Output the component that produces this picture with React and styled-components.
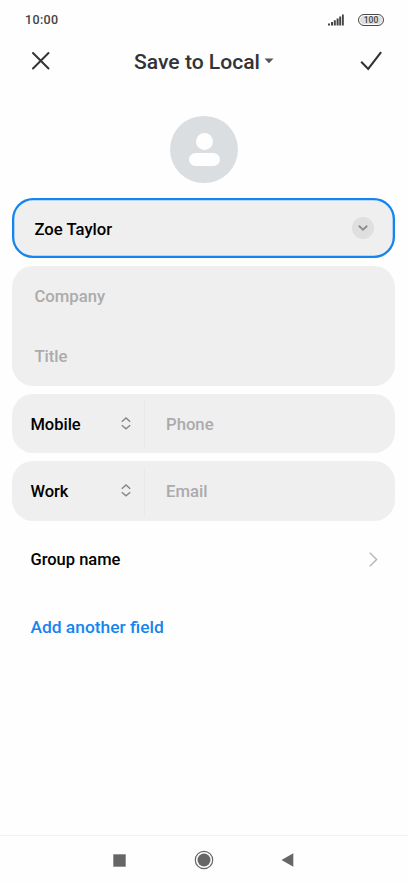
import styled, { createGlobalStyle } from "styled-components";

const GlobalStyle = createGlobalStyle`
  * {
    box-sizing: border-box;
  }
  body {
    margin: 0;
    background: #fefefe;
    font-family: Roboto, "Noto Sans", sans-serif;
    font-weight: 500;
  }
  button,
  input {
    font: inherit;
    color: inherit;
    border: none;
    background: none;
    padding: 0;
  }
  svg {
    display: block;
    flex-shrink: 0;
  }
`;

const StyledScreen = styled.div`
  height: 884px;
  display: flex;
  flex-direction: column;
  overflow: hidden;
`;

const StyledStatusBar = styled.div`
  height: 38px;
  padding: 1px 24px 0 25px;
  display: flex;
  justify-content: space-between;
  align-items: center;
  color: #444;
  font-size: 12.5px;
  letter-spacing: 0.35px;
`;

const StyledStatusIcons = styled.div`
  display: flex;
  align-items: center;
  gap: 14px;
`;

const StyledBattery = styled.div`
  width: 26px;
  height: 12px;
  border: 1px solid #4a4a4a;
  border-radius: 6px;
  box-shadow: inset 0 0 0 1px #fefefe;
  background: #dedede;
  font-size: 8.5px;
  line-height: 10.5px;
  letter-spacing: 0;
  text-align: center;
`;

const StyledHeader = styled.header`
  height: 46px;
  padding: 0 25px 0 31px;
  display: flex;
  justify-content: space-between;
  align-items: center;
  color: #333;
`;

const StyledTitle = styled.button`
  display: flex;
  align-items: center;
  gap: 4px;
  padding-top: 1px;
  margin-right: 3px;
  font-size: 21.1px;
  line-height: 26px;
  white-space: nowrap;
`;

const StyledIconButton = styled.button`
  display: flex;
`;

const StyledAvatar = styled.div`
  width: 67.5px;
  height: 67.5px;
  margin: 31.7px auto 15.3px;
  border-radius: 50%;
  background: #dadee1;
  display: flex;
  flex-direction: column;
  align-items: center;
  padding-top: 17px;
  gap: 3px;
`;

const StyledHead = styled.div`
  width: 17px;
  height: 17px;
  border-radius: 50%;
  background: #fefefe;
`;

const StyledShoulders = styled.div`
  width: 31px;
  height: 13px;
  border-radius: 7px;
  background: #fefefe;
`;

const StyledForm = styled.main`
  flex: 1;
  padding: 0 12.6px 0 12.4px;
  display: flex;
  flex-direction: column;
  gap: 8px;
`;

const StyledCard = styled.div`
  flex-shrink: 0;
  border-radius: 21px;
  background: #efefef;
  box-shadow: ${({ $active }) => ($active ? "inset 0 0 0 2.3px #1485f0" : "none")};
`;

const StyledRow = styled.div`
  height: 59.7px;
  padding: ${({ $top }) => $top || 1}px ${({ $right }) => $right || 17.2}px 0
    ${({ $left }) => $left || 18}px;
  display: flex;
  align-items: center;
  flex-shrink: 0;
`;

const StyledInput = styled.input`
  flex: 1;
  min-width: 0;
  height: 24px;
  outline: none;
  color: #000;
  font-size: 16.7px;

  &::placeholder {
    color: #ababab;
    opacity: 1;
  }
`;

const StyledTypeSelect = styled.button`
  width: 114.6px;
  height: 48px;
  padding-right: 13px;
  margin-right: 21px;
  display: flex;
  justify-content: space-between;
  align-items: center;
  border-right: 1px solid #eaeaea;
  color: #000;
  font-size: 16.5px;

  svg {
    margin-bottom: 1.5px;
  }
`;

const StyledExpand = styled.button`
  width: 22px;
  height: 22px;
  border-radius: 50%;
  background: #dfdfdf;
  display: flex;
  justify-content: center;
  align-items: center;
  margin-bottom: 2.5px;
`;

const StyledLink = styled.button`
  flex: 1;
  text-align: left;
  font-size: ${({ $accent }) => ($accent ? 17.4 : 16.5)}px;
  color: ${({ $accent }) => ($accent ? "#1485f0" : "#000")};
`;

const StyledNavBar = styled.nav`
  height: 49px;
  border-top: 1px solid #f2f2f2;
  padding: 0 114px 0 113px;
  display: flex;
  justify-content: space-between;
  align-items: center;
`;

const SignalIcon = () => (
  <svg width="16" height="12" viewBox="0 0 16 12" fill="#444">
    <path d="M0 9.5h2V11.5H0zM3 8h2v3.5H3zM5.8 6.3h2v5.2h-2zM8.6 4.5h2v7h-2zM11.2 2.5h2v9h-2zM14 .5h1.8v11H14z" />
  </svg>
);

const CloseIcon = () => (
  <svg width="20" height="20" viewBox="0 0 20 20" fill="none" stroke="#333" strokeWidth="2" strokeLinecap="round">
    <path d="M2 2l15.5 15.5M17.5 2L2 17.5" />
  </svg>
);

const CheckIcon = () => (
  <svg width="23" height="20" viewBox="0 0 23 20" fill="none" stroke="#333" strokeWidth="2.1">
    <path d="M1.2 10.8l7 7.1L21.1 1.2" />
  </svg>
);

const CaretIcon = () => (
  <svg width="10" height="8" viewBox="0 0 10 8" fill="#555">
    <path d="M.5.5h9L5 5.3z" />
  </svg>
);

const ChevronDownIcon = () => (
  <svg width="10" height="6" viewBox="0 0 10 6" fill="none" stroke="#8e8e8e" strokeWidth="1.9">
    <path d="M.8.8L5 4.6 9.2.8" />
  </svg>
);

const UpDownIcon = () => (
  <svg width="10" height="13" viewBox="0 0 10 13" fill="none" stroke="#858585" strokeWidth="1.4">
    <path d="M.8 4.7L5 1l4.2 3.7M.8 8.2L5 11.9l4.2-3.7" />
  </svg>
);

const ChevronRightIcon = () => (
  <svg width="9" height="15" viewBox="0 0 9 15" fill="none" stroke="#b5b5b5" strokeWidth="1.4">
    <path d="M.8.8l6.8 6.7L.8 14.2" />
  </svg>
);

const TypedField = ({ type, placeholder, top }) => (
  <StyledCard>
    <StyledRow $top={top}>
      <StyledTypeSelect>
        {type}
        <UpDownIcon />
      </StyledTypeSelect>
      <StyledInput placeholder={placeholder} />
    </StyledRow>
  </StyledCard>
);

const App = () => {
  return (
    <StyledScreen>
      <GlobalStyle />
      <StyledStatusBar>
        <span>10:00</span>
        <StyledStatusIcons>
          <SignalIcon />
          <StyledBattery>100</StyledBattery>
        </StyledStatusIcons>
      </StyledStatusBar>

      <StyledHeader>
        <StyledIconButton aria-label="Close">
          <CloseIcon />
        </StyledIconButton>
        <StyledTitle>
          Save to Local
          <CaretIcon />
        </StyledTitle>
        <StyledIconButton aria-label="Save">
          <CheckIcon />
        </StyledIconButton>
      </StyledHeader>

      <StyledAvatar>
        <StyledHead />
        <StyledShoulders />
      </StyledAvatar>

      <StyledForm>
        <StyledCard $active>
          <StyledRow $top={2.5} $left={22} $right={21.5}>
            <StyledInput defaultValue="Zoe Taylor" />
            <StyledExpand aria-label="More name fields">
              <ChevronDownIcon />
            </StyledExpand>
          </StyledRow>
        </StyledCard>

        <StyledCard>
          <StyledRow $left={22}>
            <StyledInput placeholder="Company" />
          </StyledRow>
          <StyledRow $left={22}>
            <StyledInput placeholder="Title" />
          </StyledRow>
        </StyledCard>

        <TypedField type="Mobile" placeholder="Phone" top={2} />
        <TypedField type="Work" placeholder="Email" top={1} />

        <StyledRow>
          <StyledLink>Group name</StyledLink>
          <ChevronRightIcon />
        </StyledRow>
        <StyledRow>
          <StyledLink $accent>Add another field</StyledLink>
        </StyledRow>
      </StyledForm>

      <StyledNavBar>
        <svg width="13" height="13" viewBox="0 0 13 13">
          <rect x=".3" y=".3" width="12.4" height="12.4" fill="#666" />
        </svg>
        <svg width="20" height="20" viewBox="0 0 20 20">
          <circle cx="10" cy="10" r="8.7" fill="none" stroke="#666" strokeWidth="1.2" />
          <circle cx="10" cy="10" r="6.5" fill="#666" />
        </svg>
        <svg width="13" height="14" viewBox="0 0 13 14">
          <path d="M.5 7L12.3.2v13.6z" fill="#666" />
        </svg>
      </StyledNavBar>
    </StyledScreen>
  );
};

export default App;
